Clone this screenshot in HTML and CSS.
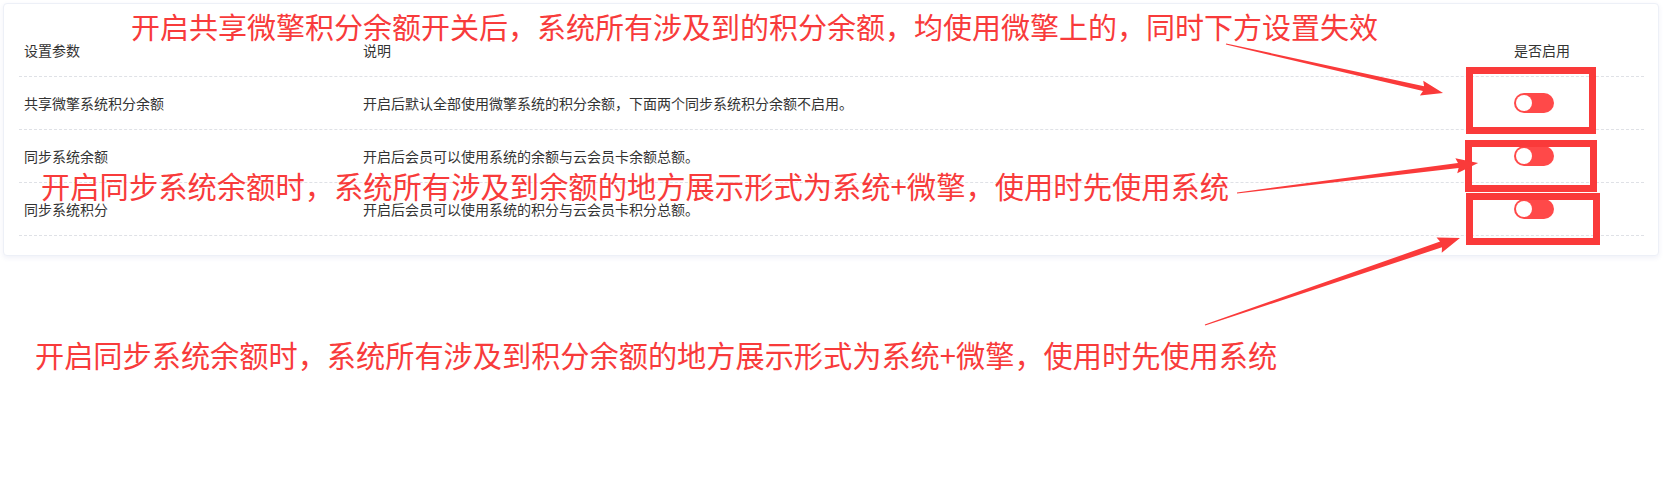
FILE: index.html
```html
<!DOCTYPE html>
<html lang="zh-CN">
<head>
    <meta charset="UTF-8">
    <meta name="viewport" content="width=device-width, initial-scale=1.0">
    <title>积分余额设置</title>
    <link rel="stylesheet" href="styles.css">
</head>
<body>
    <!-- 设置表格 -->
    <div class="setting-card">
        <div class="setting-row head">
            <div class="cell">设置参数</div>
            <div class="cell">说明</div>
            <div class="cell">是否启用</div>
        </div>
        <div class="setting-row">
            <div class="cell">共享微擎系统积分余额</div>
            <div class="cell">开启后默认全部使用微擎系统的积分余额，下面两个同步系统积分余额不启用。</div>
            <div class="cell"><span class="switch"></span></div>
        </div>
        <div class="setting-row">
            <div class="cell">同步系统余额</div>
            <div class="cell">开启后会员可以使用系统的余额与云会员卡余额总额。</div>
            <div class="cell"><span class="switch"></span></div>
        </div>
        <div class="setting-row">
            <div class="cell">同步系统积分</div>
            <div class="cell">开启后会员可以使用系统的积分与云会员卡积分总额。</div>
            <div class="cell"><span class="switch"></span></div>
        </div>
    </div>

    <!-- 标注文字 -->
    <div class="note note-1">开启共享微擎积分余额开关后，系统所有涉及到的积分余额，均使用微擎上的，同时下方设置失效</div>
    <div class="note note-2">开启同步系统余额时，系统所有涉及到余额的地方展示形式为系统+微擎，使用时先使用系统</div>
    <div class="note note-3">开启同步系统余额时，系统所有涉及到积分余额的地方展示形式为系统+微擎，使用时先使用系统</div>

    <!-- 标注框 -->
    <div class="mark mark-1"></div>
    <div class="mark mark-2"></div>
    <div class="mark mark-3"></div>

    <!-- 箭头 -->
    <svg class="arrows" width="1679" height="495" viewBox="0 0 1679 495">
        <g transform="translate(1226 44) rotate(12.72)">
            <polygon points="0,-0.6 202.5,-2.5 200.5,-7.5 222.5,0 200.5,7.5 202.5,2.5 0,0.6"></polygon>
        </g>
        <g transform="translate(1237 193) rotate(-7.1)">
            <polygon points="0,-0.6 223,-2.5 221,-7.5 243,0 221,7.5 223,2.5 0,0.6"></polygon>
        </g>
        <g transform="translate(1205 325) rotate(-18.84)">
            <polygon points="0,-0.6 249.4,-3 247.4,-8 269.4,0 247.4,8 249.4,3 0,0.6"></polygon>
        </g>
    </svg>
</body>
</html>
```

FILE: styles.css
```css
body {
    font-family: "Noto Sans CJK SC", "Noto Sans", sans-serif;
    background: #fff;
    margin: 0;
    padding: 3px 20px 0 3px;
    position: relative;
    height: 492px;
    overflow: hidden;
}
.setting-card {
    background: white;
    border: 1px solid #edf0f7;
    border-radius: 4px;
    box-shadow: 0 2px 5px rgba(60, 80, 160, 0.08);
    padding: 20px 14px 19px 15px;
}
.setting-row {
    display: grid;
    grid-template-columns: 339px 1fr 135px;
    height: 52px;
    align-items: center;
    border-bottom: 1px dashed #dfe1e6;
    font-size: 14px;
    color: #333;
}
.cell {
    padding-left: 5px;
    white-space: nowrap;
}
.switch {
    display: block;
    position: relative;
    width: 40px;
    height: 20px;
    border-radius: 10px;
    background: #ff4949;
}
.switch::after {
    content: "";
    position: absolute;
    left: 2px;
    top: 2px;
    width: 16px;
    height: 16px;
    border-radius: 50%;
    background: #fff;
}

/* 标注 */
.note {
    position: absolute;
    color: #f83b3b;
    font-size: 29px;
    line-height: 29px;
    white-space: nowrap;
}
.note-1 {
    left: 131px;
    top: 12px;
}
.note-2 {
    left: 41px;
    top: 171px;
    font-size: 29.3px;
}
.note-3 {
    left: 35px;
    top: 340px;
    font-size: 29.2px;
}
.mark {
    position: absolute;
    box-sizing: border-box;
    border: 7px solid #fa3a3a;
}
.mark-1 {
    left: 1466px;
    top: 67px;
    width: 130px;
    height: 67px;
}
.mark-2 {
    left: 1465px;
    top: 140px;
    width: 132px;
    height: 52px;
}
.mark-3 {
    left: 1466px;
    top: 193px;
    width: 134px;
    height: 52px;
}
.arrows {
    position: absolute;
    left: 0;
    top: 0;
    pointer-events: none;
}
.arrows polygon {
    fill: #fa3a3a;
}
```
